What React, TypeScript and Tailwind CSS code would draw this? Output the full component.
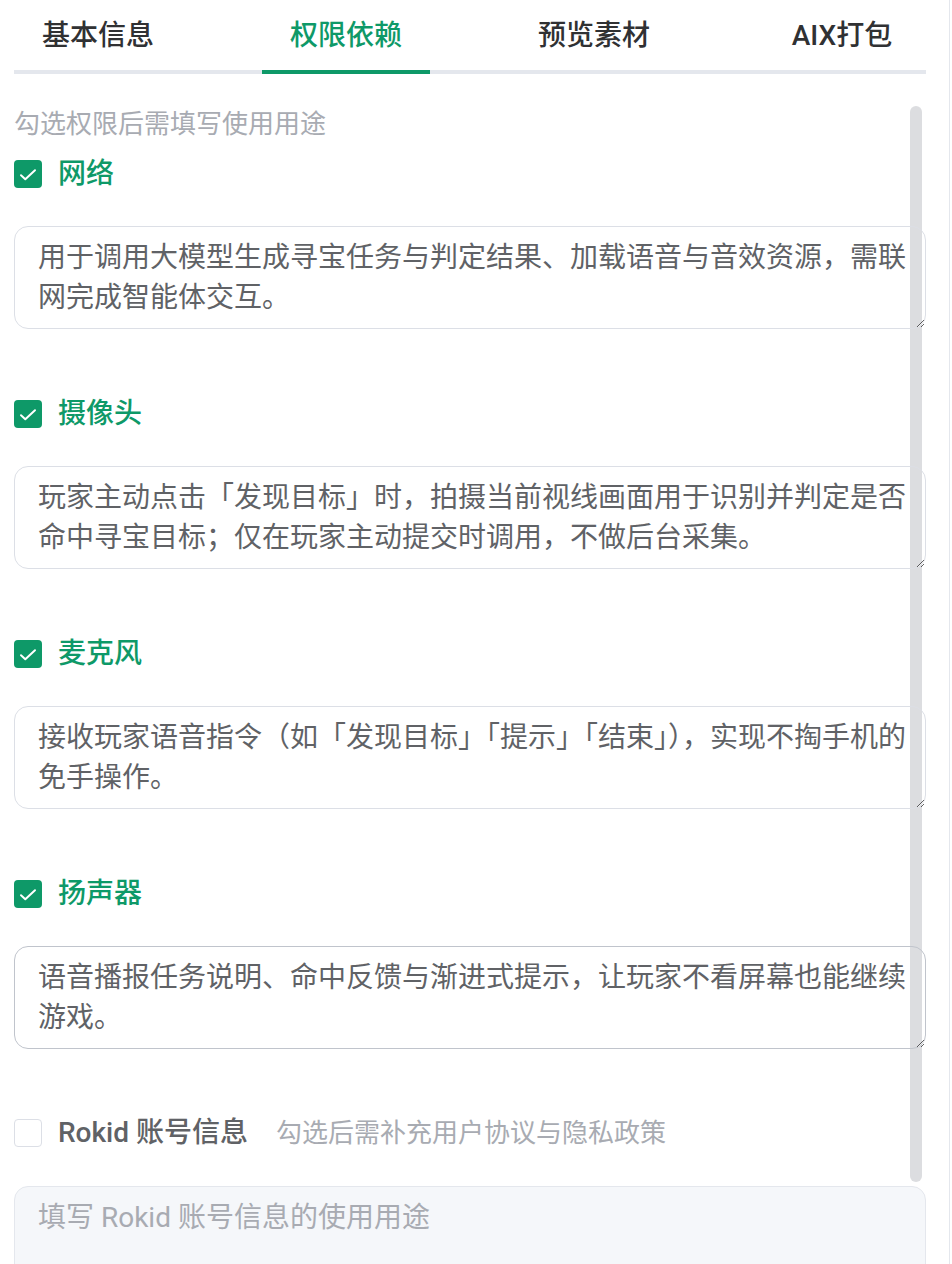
import React from "react";

const GREEN = "text-[#0e9968]";

const tabs = ["基本信息", "权限依赖", "预览素材", "AIX打包"];

const perms = [
  {
    name: "网络",
    text: "用于调用大模型生成寻宝任务与判定结果、加载语音与音效资源，需联网完成智能体交互。",
  },
  {
    name: "摄像头",
    text: "玩家主动点击「发现目标」时，拍摄当前视线画面用于识别并判定是否命中寻宝目标；仅在玩家主动提交时调用，不做后台采集。",
  },
  {
    name: "麦克风",
    text: "接收玩家语音指令（如「发现目标」「提示」「结束」），实现不掏手机的免手操作。",
  },
  {
    name: "扬声器",
    text: "语音播报任务说明、命中反馈与渐进式提示，让玩家不看屏幕也能继续游戏。",
    hover: true,
  },
];

function Checked() {
  return (
    <span className="flex h-[28px] w-[28px] shrink-0 rounded-[4px] bg-[#0e9968]">
      <svg width="28" height="28" viewBox="0 0 28 28" fill="none">
        <path d="M7 15.2 11.3 19.2 21 10.2" stroke="white" strokeWidth="2" strokeLinecap="round" strokeLinejoin="round" />
      </svg>
    </span>
  );
}

export default function App() {
  return (
    <div className="relative h-[1264px] w-[950px] overflow-hidden border-r border-[#e4e7ed] bg-white font-['Roboto','Noto_Sans_CJK_SC',sans-serif]">
      {/* overlay scrollbar, under the transparent fields */}
      <div className="absolute left-[910px] top-[106px] h-[1076px] w-[12px] rounded-full bg-[#dcdde0]" />

      {/* tabs */}
      <div className="ml-[14px] mr-[23px] flex justify-between border-b-4 border-[#e4e7ed]">
        {tabs.map((t, i) => (
          <div
            key={t}
            className={
              i === 1
                ? `-mb-1 flex h-[74px] w-[168px] items-center justify-center border-b-4 border-[#0e9968] pt-[2px] text-[28px] font-medium ${GREEN}`
                : "flex h-[70px] w-[168px] items-center justify-center pt-[2px] text-[28px] font-medium text-[#303133]"
            }
          >
            {t}
          </div>
        ))}
      </div>

      <div className="relative ml-[14px] mr-[23px]">
        <p className="mt-8 text-[26px] leading-[36px] text-[#a8abb2]">勾选权限后需填写使用用途</p>

        {perms.map((p, i) => (
          <div key={p.name} className={i === 0 ? "mt-3" : "mt-[65px]"}>
            <label className="flex h-[40px] items-center gap-4">
              <Checked />
              <span className={`text-[28px] font-medium ${GREEN}`}>{p.name}</span>
            </label>
            <textarea
              readOnly
              defaultValue={p.text}
              className={`mt-8 block h-[103px] w-full resize-y rounded-[14px] border bg-transparent py-[11px] pl-[23px] pr-[6px] text-[28px] leading-[40px] text-[#606266] outline-none ${
                p.hover ? "border-[#c0c4cc]" : "border-[#dcdfe6]"
              }`}
            />
          </div>
        ))}

        <div className="mt-[64px]">
          <label className="flex h-[40px] items-center">
            <span className="h-[28px] w-[28px] shrink-0 rounded-[4px] border-[1.5px] border-[#dcdfe6] bg-white" />
            <span className="ml-4 text-[28px] font-medium text-[#606266]">Rokid 账号信息</span>
            <span className="ml-7 text-[26px] text-[#a8abb2]">勾选后需补充用户协议与隐私政策</span>
          </label>
          <textarea
            disabled
            placeholder="填写 Rokid 账号信息的使用用途"
            className="mt-[33px] block h-[103px] w-full resize-y rounded-[14px] border border-[#e4e7ed] bg-[#f5f7fa] py-[11px] pl-[23px] pr-[6px] text-[28px] leading-[40px] text-[#606266] outline-none placeholder:text-[#a8abb2]"
          />
        </div>
      </div>
    </div>
  );
}
